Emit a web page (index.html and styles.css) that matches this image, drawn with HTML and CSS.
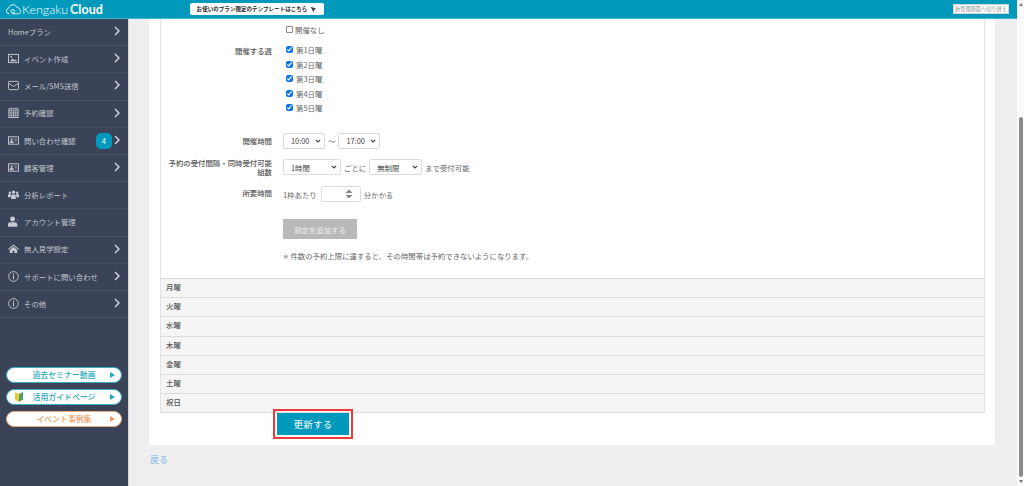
FILE: index.html
```html
<!DOCTYPE html>
<html lang="ja">
<head>
<meta charset="utf-8">
<title>Kengaku Cloud</title>
<link rel="stylesheet" href="styles.css">
</head>
<body>
<div class="app">
  <div class="page">
    <header class="topbar">
      <div class="logo">
        <svg class="logo-mark" viewBox="0 0 24 14" width="17" height="11"><path d="M6 13a4 4 0 0 1-.8-7.900 6 6 0 0 1 11-2.100M10 13h9a3.500 3.500 0 0 0 1-6.800 4 4 0 0 0-4-3" fill="none" stroke="#fff" stroke-width="1.200"/><circle cx="11" cy="9.500" r="2.500" fill="none" stroke="#fff" stroke-width="1.200"/></svg>
        <span class="logo-thin">Kengaku</span><span class="logo-bold">Cloud</span>
      </div>
      <a class="notice">お使いのプラン限定のテンプレートはこちら
        <svg viewBox="0 0 10 10" width="7" height="7"><path d="M1 1l8 3-3 1.500L5 9z" fill="#333"/></svg>
      </a>
      <a class="switch">新管理画面へ切り替え</a>
    </header>
    <div class="body">
      <nav class="sidebar">
        <ul class="menu">
          <li class="item"><span class="label">Homeプラン</span><svg class="chev" viewBox="0 0 6 10"><path d="M1 1l4 4-4 4" /></svg></li>
          <li class="item"><svg class="ico" viewBox="0 0 12 10"><rect x=".5" y=".5" width="11" height="9" fill="#3a4358" stroke="#c9ccd3"/><path d="M2 8l3-3 2 2 1.500-1L10 8z" fill="#c9ccd3"/><circle cx="3.500" cy="3" r="1" fill="#c9ccd3"/></svg><span class="label">イベント作成</span><svg class="chev" viewBox="0 0 6 10"><path d="M1 1l4 4-4 4" /></svg></li>
          <li class="item"><svg class="ico" viewBox="0 0 12 10"><rect x=".5" y=".5" width="11" height="9" rx="1" fill="none" stroke="#c9ccd3"/><path d="M.5 2.500L6 6l5.500-3.500" fill="none" stroke="#c9ccd3"/></svg><span class="label">メール/SMS送信</span><svg class="chev" viewBox="0 0 6 10"><path d="M1 1l4 4-4 4" /></svg></li>
          <li class="item"><svg class="ico" viewBox="0 0 12 12"><rect x="1" y="2" width="10" height="9.500" fill="none" stroke="#c9ccd3"/><path d="M1 4h10M1 6.500h10M1 9h10M3.500 4v7M6 4v7M8.500 4v7M3.500 .5v2M8.500 .5v2" stroke="#c9ccd3" stroke-width=".8"/></svg><span class="label">予約確認</span><svg class="chev" viewBox="0 0 6 10"><path d="M1 1l4 4-4 4" /></svg></li>
          <li class="item"><svg class="ico" viewBox="0 0 12 10"><rect x=".5" y="1" width="11" height="8" fill="none" stroke="#c9ccd3"/><circle cx="4" cy="4" r="1.200" fill="#c9ccd3"/><path d="M2 7.500a2 2 0 0 1 4 0zM7 3.500h3M7 5.500h3" fill="#c9ccd3" stroke="#c9ccd3" stroke-width=".7"/></svg><span class="label">問い合わせ確認</span><span class="badge">4</span><svg class="chev" viewBox="0 0 6 10"><path d="M1 1l4 4-4 4" /></svg></li>
          <li class="item"><svg class="ico" viewBox="0 0 12 10"><rect x=".5" y="1" width="11" height="8" fill="none" stroke="#c9ccd3"/><circle cx="4" cy="4" r="1.200" fill="#c9ccd3"/><path d="M2 7.500a2 2 0 0 1 4 0zM7 3.500h3M7 5.500h3" fill="#c9ccd3" stroke="#c9ccd3" stroke-width=".7"/></svg><span class="label">顧客管理</span><svg class="chev" viewBox="0 0 6 10"><path d="M1 1l4 4-4 4" /></svg></li>
          <li class="item"><svg class="ico" viewBox="0 0 12 10"><circle cx="6" cy="2.500" r="1.800" fill="#c9ccd3"/><circle cx="2" cy="3" r="1.300" fill="#c9ccd3"/><circle cx="10" cy="3" r="1.300" fill="#c9ccd3"/><path d="M3.500 10V6.500a1.500 1.500 0 0 1 1.500-1.500h2a1.500 1.500 0 0 1 1.500 1.500V10zM0 8V6a1.500 1.500 0 0 1 1.500-1.500H3V8zM12 8V6a1.500 1.500 0 0 0-1.500-1.500H9V8z" fill="#c9ccd3"/></svg><span class="label">分析レポート</span></li>
          <li class="item"><svg class="ico" viewBox="0 0 12 12"><circle cx="5" cy="3.200" r="2.700" fill="#c9ccd3"/><path d="M0 11.500V9.500a2.500 2.500 0 0 1 2.500-2.500h5A2.500 2.500 0 0 1 10 9.500v2zM9.500 4.500h2" fill="#c9ccd3" stroke="#c9ccd3" stroke-width=".5"/></svg><span class="label">アカウント管理</span></li>
          <li class="item"><svg class="ico" viewBox="0 0 12 10"><path d="M6 .5L0 5.500l.8.800L6 2l5.200 4.300.8-.8zM2 6.500L6 3l4 3.500V10H7V7.500H5V10H2z" fill="#c9ccd3"/></svg><span class="label">無人見学設定</span><svg class="chev" viewBox="0 0 6 10"><path d="M1 1l4 4-4 4" /></svg></li>
          <li class="item"><svg class="ico" viewBox="0 0 12 12"><circle cx="6" cy="6" r="5.300" fill="none" stroke="#c9ccd3"/><path d="M6 5v4M6 2.800v1.200" stroke="#c9ccd3" stroke-width="1.200"/></svg><span class="label">サポートに問い合わせ</span><svg class="chev" viewBox="0 0 6 10"><path d="M1 1l4 4-4 4" /></svg></li>
          <li class="item"><svg class="ico" viewBox="0 0 12 12"><circle cx="6" cy="6" r="5.300" fill="none" stroke="#c9ccd3"/><path d="M6 5v4M6 2.800v1.200" stroke="#c9ccd3" stroke-width="1.200"/></svg><span class="label">その他</span><svg class="chev" viewBox="0 0 6 10"><path d="M1 1l4 4-4 4" /></svg></li>
        </ul>
        <div class="pills">
          <a class="pill">過去セミナー動画<i class="tri"></i></a>
          <a class="pill"><svg class="leaf" viewBox="0 0 8 10"><path d="M0 0l4 2v8L0 7.500z" fill="#e8c93a"/><path d="M8 0L4 2v8l4-2.500z" fill="#4aa45a"/></svg>活用ガイドページ<i class="tri"></i></a>
          <a class="pill pill-orange">イベント事例集<i class="tri"></i></a>
        </div>
      </nav>
      <main class="main">
        <section class="card">
          <div class="panel">
            <div class="form">
              <div class="row row-none"><div class="key"></div><div class="val"><label class="check"><input type="checkbox" class="cb-none">開催なし</label></div></div>
              <div class="row row-weeks">
                <div class="key">開催する週</div>
                <div class="val weeks">
                  <label class="check"><input type="checkbox" checked>第1日曜</label>
                  <label class="check"><input type="checkbox" checked>第2日曜</label>
                  <label class="check"><input type="checkbox" checked>第3日曜</label>
                  <label class="check"><input type="checkbox" checked>第4日曜</label>
                  <label class="check"><input type="checkbox" checked>第5日曜</label>
                </div>
              </div>
              <div class="row row-time">
                <div class="key">開催時間</div>
                <div class="val"><select class="sel sel-time"><option>10:00</option></select><span>〜</span><select class="sel sel-time"><option>17:00</option></select></div>
              </div>
              <div class="row row-interval">
                <div class="key">予約の受付間隔・同時受付可能組数</div>
                <div class="val"><select class="sel sel-interval"><option>1時間</option></select><span>ごとに</span><select class="sel sel-limit"><option>無制限</option></select><span>まで受付可能</span></div>
              </div>
              <div class="row row-duration">
                <div class="key">所要時間</div>
                <div class="val"><span>1枠あたり</span><input class="num" type="number"><span>分かかる</span></div>
              </div>
              <div class="row row-add"><div class="key"></div><div class="val"><button class="add" type="button">設定を追加する</button></div></div>
              <div class="row row-note"><div class="key"></div><div class="val note"><p class="note-text"><span class="mark">※</span>件数の予約上限に達すると、その時間帯は予約できないようになります。</p></div></div>
            </div>
            <div class="days">
              <div class="day">月曜</div>
              <div class="day">火曜</div>
              <div class="day">水曜</div>
              <div class="day">木曜</div>
              <div class="day">金曜</div>
              <div class="day">土曜</div>
              <div class="day">祝日</div>
            </div>
          </div>
          <button class="save" type="button">更新する</button>
        </section>
        <a class="back">戻る</a>
      </main>
    </div>
  </div>
  <div class="scrollbar">
    <i class="arrow-up"></i>
    <div class="track"><div class="thumb"></div></div>
    <i class="arrow-down"></i>
  </div>
</div>
</body>
</html>
```
FILE: styles.css
```css
* { box-sizing: border-box; }
html, body { margin: 0; height: 486px; overflow: hidden; }
body { font-family: "Noto Sans CJK JP", "Liberation Sans", sans-serif; font-size: 7.400px; color: #555; background: #eee; }

.app { display: flex; height: 486px; }
.page { flex: 1; min-width: 0; display: flex; flex-direction: column; }

.topbar { height: 19px; flex: none; background: #0099bb; border-bottom: 1px solid #3db4ce; display: flex; align-items: center; padding: 0 8px 0 5px; }
.logo { width: 185px; display: flex; align-items: center; color: #fff; font-family: "Lato", "Liberation Sans", sans-serif; font-size: 12.500px; line-height: 13px; }
.logo-thin { font-weight: 300; margin-right: 2px; }
.logo-bold { font-weight: 700; }
.notice { width: 134px; height: 12px; background: #fff; border-radius: 2px; color: #222; font-size: 5.500px; font-weight: 700; display: flex; align-items: center; justify-content: center; gap: 3px; letter-spacing: .05px; }
.switch { margin-left: auto; width: 56px; height: 10px; border: 1px solid #cfd6da; background: #fff; color: #888; font-size: 5.200px; line-height: 8px; text-align: center; white-space: nowrap; }

.body { flex: 1; display: flex; min-height: 0; }
.sidebar { width: 129px; flex: none; background: #3a4358; border-right: 1px solid #d6d6d6; display: flex; flex-direction: column; color: #c3c7cf; }
.menu { list-style: none; margin: 0; padding: 0; }
.item { height: 27.200px; border-bottom: 1px solid #465069; display: flex; align-items: center; padding: 0 0 1.500px 8px; font-size: 7.400px; position: relative; }
.ico { width: 11px; height: 11px; margin-right: 5px; flex: none; }
.label { flex: 1; white-space: nowrap; }
.chev { width: 6px; height: 10px; position: absolute; left: 114px; top: 7px; fill: none; stroke: #d5d8de; stroke-width: 1.400; }
.badge { position: absolute; left: 96px; top: 5px; width: 16px; height: 16px; border-radius: 5px; background: #0099bb; color: #fff; font-size: 7px; line-height: 16px; text-align: center; }

.pills { margin-top: 49px; padding-left: 6px; display: flex; flex-direction: column; gap: 6.500px; }
.pill { width: 116px; height: 15.500px; border-radius: 8px; background: #fff; border: 1px solid #35aebd; color: #2aa9bb; font-size: 7.900px; font-weight: 500; display: flex; align-items: center; justify-content: center; position: relative; }
.pill-orange { border-color: #f0ac7c; color: #ee9a60; }
.tri { position: absolute; right: 6px; top: 4px; border-left: 5px solid currentColor; border-top: 3px solid transparent; border-bottom: 3px solid transparent; }
.leaf { width: 8px; height: 10px; position: absolute; left: 8px; top: 2px; }

.main { flex: 1; min-width: 0; padding: 0 22px 0 20px; display: flex; flex-direction: column; align-items: flex-start; }
.card { width: 846px; height: 426px; flex: none; background: #fff; padding: 0 10px 0 11px; }
.panel { border: 1px solid #e2e2e2; border-width: 0 1px; height: 393.500px; }
.form { height: 259px; }
.row { display: grid; grid-template-columns: 111px 1fr; column-gap: 11px; }
.key { text-align: right; font-weight: 500; line-height: 9px; color: #555; }
.val { display: flex; align-items: center; gap: 3px; color: #666; }
.row-none { height: 23.500px; padding-top: 3.500px; }
.row-none .val, .row-weeks .val { align-items: flex-start; }
.row-weeks { height: 85px; }
.row-weeks .key { padding-top: 3px; }
.weeks { flex-direction: column; gap: 0; }
.check { display: flex; align-items: center; height: 14.500px; margin-left: 3px; line-height: 1; gap: 3px; }
.check input { width: 7px; height: 7px; margin: 0; accent-color: #0a74e8; }
.check .cb-none { appearance: none; border: 1px solid #8a8a8a; border-radius: 1px; background: #fff; margin-right: -1px; }
.row-time { height: 26px; align-items: center; }
.row-interval { height: 27px; align-items: center; }
.row-interval .key { padding-left: 7px; }
.row-duration { height: 30px; align-items: start; padding-top: 5.500px; }
.row-duration .key { padding-top: 2px; }
.row-add { height: 28.500px; padding-top: 8.500px; }
.row-note { height: 39px; padding-top: 10.500px; }
.sel { height: 16px; font-family: inherit; font-size: 7.400px; color: #444; border: 1px solid #dcdcdc; border-radius: 2px; padding: 0 0 0 7px; appearance: none; background: #fff url("data:image/svg+xml,%3Csvg xmlns='http://www.w3.org/2000/svg' viewBox='0 0 6 4'%3E%3Cpath d='M.8.800L3 3l2.200-2.200' fill='none' stroke='%23444' stroke-width='1.200'/%3E%3C/svg%3E") no-repeat right 3px center / 6px 4px; }
.sel-time { width: 42px; }
.sel-interval { width: 58px; }
.sel-limit { width: 53px; }
.num { width: 40px; height: 16px; margin: 0 0 0 1px; border: 1px solid #ddd; border-radius: 2px; font-size: 7.400px; padding: 0 3px; }
.num::-webkit-inner-spin-button { opacity: 1; }
.add { width: 74px; height: 20px; background: #b9b9b9; border: 0; color: #eee; font-family: inherit; font-size: 7.400px; padding: 0; }
.row-note .note { color: #666; white-space: nowrap; align-items: flex-start; }
.note-text { margin: 0; }
.mark { display: inline-block; width: 7.400px; font-family: "DejaVu Sans", sans-serif; font-size: 6.500px; color: #777; }

.days { border-top: 1px solid #d6d6d6; }
.day { height: 19.200px; background: #f5f5f5; border-bottom: 1px solid #dcdcdc; padding-left: 5px; font-weight: 500; line-height: 16.500px; color: #555; }

.save { display: block; width: 72px; height: 22px; margin: 0 0 0 117px; background: #0099bb; border: 0; color: #fff; font-family: inherit; font-size: 9.500px; letter-spacing: .2px; outline: 2px solid #f03a3a; outline-offset: 2px; padding: 0; }

.back { margin-top: 8px; margin-left: 1px; color: #78b6f0; font-size: 9px; line-height: 14px; }

.scrollbar { width: 7px; flex: none; background: #fafafa; display: flex; flex-direction: column; align-items: center; }
.arrow-up, .arrow-down { flex: none; border-left: 2.500px solid transparent; border-right: 2.500px solid transparent; margin: 3px 0; }
.arrow-up { border-bottom: 3px solid #777; }
.arrow-down { border-top: 3px solid #777; }
.track { flex: 1; width: 100%; padding: 108px 1.500px 0; display: flex; }
.thumb { flex: 1; background: #8a8a8a; border-radius: 2px; }
```
